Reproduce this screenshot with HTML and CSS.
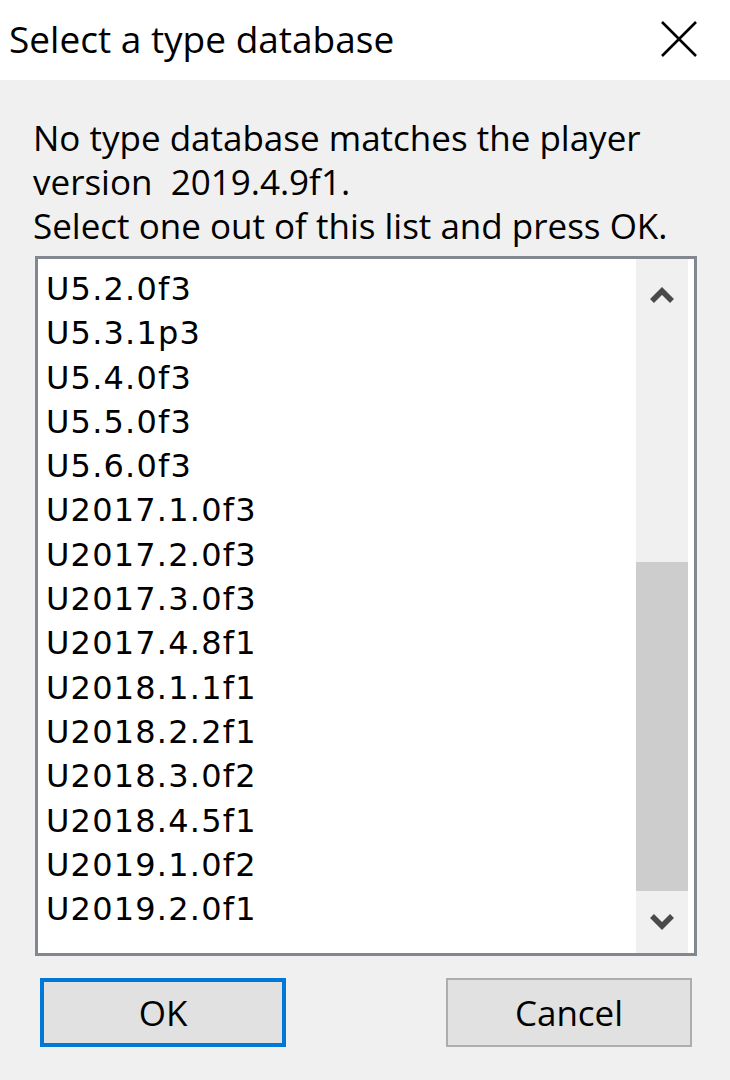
FILE: index.html
```html
<!DOCTYPE html>
<html>
<head>
<meta charset="utf-8">
<link rel="stylesheet" href="styles.css">
</head>
<body>
<div class="dialog">
  <div class="titlebar">
    <span class="title">Select a type database</span>
    <svg class="close" width="38" height="38" viewBox="0 0 38 38"><path d="M2 2 L36 36 M36 2 L2 36" stroke="#000" stroke-width="2.6" fill="none"/></svg>
  </div>
  <div class="body">
    <div class="message">
      <div>No type database matches the player</div>
      <div>version &nbsp;2019.4.9f1.</div>
      <div>Select one out of this list and press OK.</div>
    </div>
    <div class="listbox">
      <div class="items">
        <div>U5.2.0f3</div>
        <div>U5.3.1p3</div>
        <div>U5.4.0f3</div>
        <div>U5.5.0f3</div>
        <div>U5.6.0f3</div>
        <div>U2017.1.0f3</div>
        <div>U2017.2.0f3</div>
        <div>U2017.3.0f3</div>
        <div>U2017.4.8f1</div>
        <div>U2018.1.1f1</div>
        <div>U2018.2.2f1</div>
        <div>U2018.3.0f2</div>
        <div>U2018.4.5f1</div>
        <div>U2019.1.0f2</div>
        <div>U2019.2.0f1</div>
      </div>
      <div class="scrollbar">
        <div class="arrow up">
          <svg width="26" height="18" viewBox="0 0 26 18"><path d="M3 15 L13 5 L23 15" stroke="#4a4a4a" stroke-width="5.5" fill="none"/></svg>
        </div>
        <div class="track"></div>
        <div class="thumb"></div>
        <div class="arrow down">
          <svg width="26" height="18" viewBox="0 0 26 18"><path d="M3 3 L13 13 L23 3" stroke="#4a4a4a" stroke-width="5.5" fill="none"/></svg>
        </div>
      </div>
    </div>
    <div class="buttons">
      <button class="btn default">OK</button>
      <button class="btn">Cancel</button>
    </div>
  </div>
</div>
</body>
</html>
```

FILE: styles.css
```css
html, body {
  margin: 0;
  padding: 0;
}
body {
  width: 730px;
  height: 1080px;
  background: #f0f0f0;
  font-family: "Open Sans", "Noto Sans", sans-serif;
  color: #000;
  overflow: hidden;
}
.dialog {
  display: flex;
  flex-direction: column;
}
.titlebar {
  height: 80px;
  background: #fff;
  display: flex;
  align-items: center;
  justify-content: space-between;
  padding: 0 32px 0 9px;
}
.title {
  font-size: 37px;
  margin-top: -4px;
}
.close {
  display: block;
  margin-top: -2px;
}
.body {
  padding: 36px 33px 0 35px;
}
.message {
  font-size: 35px;
  line-height: 44px;
  margin-left: -2px;
}
.listbox {
  margin-top: 8px;
  width: 656px;
  height: 694px;
  border: 3px solid #828790;
  background: #fff;
  display: flex;
}
.items {
  flex: 1;
  padding: 8px 0 0 8px;
  font-family: "DejaVu Sans", sans-serif;
  font-size: 32px;
  line-height: 44.3px;
  letter-spacing: 1.2px;
}
.scrollbar {
  width: 52px;
  margin-right: 6px;
  background: #f0f0f0;
  display: flex;
  flex-direction: column;
}
.arrow {
  display: flex;
  align-items: center;
  justify-content: center;
}
.arrow.up {
  height: 72px;
}
.arrow.down {
  height: 62px;
}
.track {
  flex: 1;
}
.thumb {
  height: 329px;
  background: #cdcdcd;
}
.buttons {
  display: flex;
  justify-content: space-between;
  margin-top: 22px;
  padding: 0 5px 0 5px;
}
.btn {
  width: 246px;
  height: 69px;
  background: #e1e1e1;
  border: 2px solid #adadad;
  font-family: "Open Sans", "Noto Sans", sans-serif;
  font-size: 35px;
  color: #000;
  padding: 0;
}
.btn.default {
  border: 4px solid #0078d7;
}
```
